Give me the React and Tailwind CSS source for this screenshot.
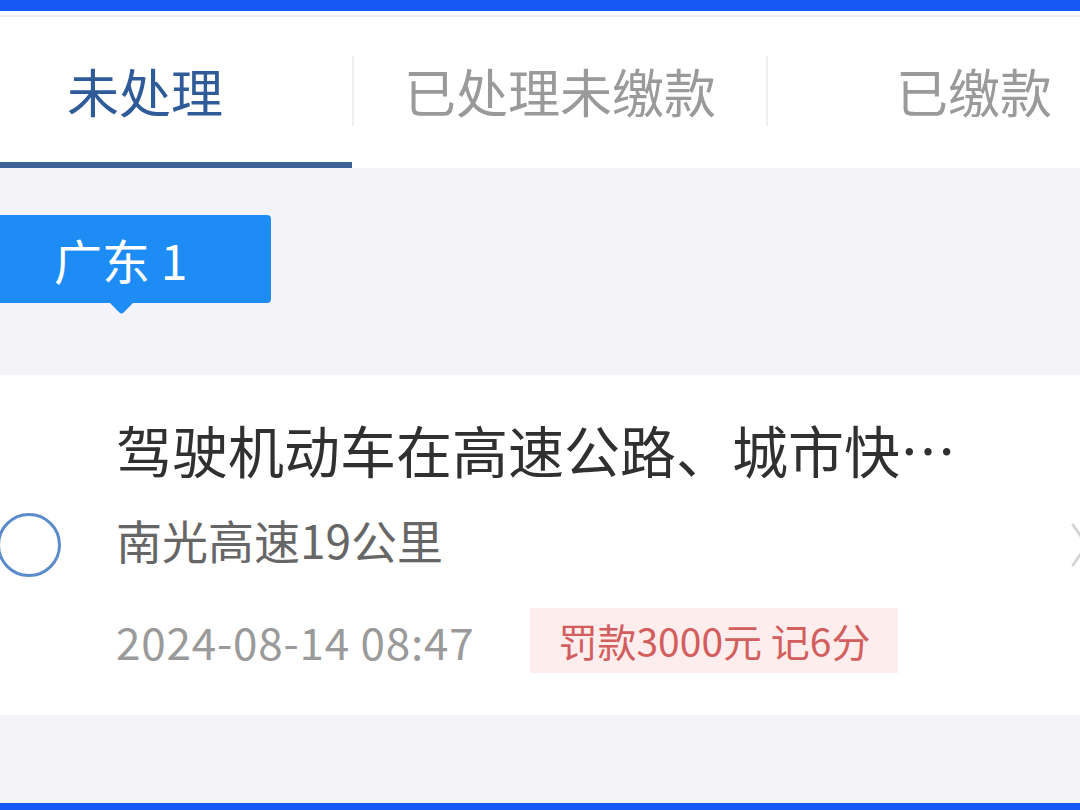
import React from "react";

const FONT = { fontFamily: '"Noto Sans CJK SC", "Noto Sans", sans-serif' };

export default function App() {
  return (
    <div className="w-[1080px] h-[810px] overflow-hidden bg-[#f4f3f8] flex flex-col" style={FONT}>
      <div className="h-[11px] bg-[#1558f6] shrink-0" />
      <div className="w-[1242px] ml-[-62px] flex flex-col flex-1">
        {/* tabs */}
        <div className="bg-white flex flex-col shrink-0">
          <div className="h-[4px] bg-white" />
          <div className="h-[2px] bg-[#ececf1]" />
          <div className="h-[145px] flex items-center pt-[2px]">
            <div className="w-[414px] flex justify-center text-[52px] leading-none text-[#2f5c98]">未处理</div>
            <div className="w-[2px] h-[70px] bg-[#efeff2]" />
            <div className="w-[412px] flex justify-center text-[52px] leading-none text-[#9a9a9a]">已处理未缴款</div>
            <div className="w-[2px] h-[70px] bg-[#efeff2]" />
            <div className="w-[412px] flex justify-center text-[52px] leading-none text-[#9a9a9a]">已缴款</div>
          </div>
          <div className="h-[6px] w-[414px] bg-[#3a6296]" />
        </div>

        {/* region tag */}
        <div className="pt-[47px] pl-[38px] shrink-0">
          <div className="relative w-[295px] h-[88px] bg-[#1e8cf5] rounded-[4px] flex items-center pl-[78px] text-white text-[48px] leading-none">
            <span>广东 1</span>
            <div className="absolute left-[137px] bottom-[-8px] w-[17px] h-[17px] bg-[#1e8cf5] rotate-45 rounded-br-[3px]" />
          </div>
        </div>

        {/* card */}
        <div className="mt-[72px] bg-white h-[340px] flex items-center shrink-0">
          <div className="w-[178px] flex justify-start pl-[59px] shrink-0">
            <div className="w-[64px] h-[64px] rounded-full border-[3px] border-[#5b8bca]" />
          </div>
          <div className="flex-1 flex flex-col pt-[0px]">
            <div className="text-[56px] leading-[64px] text-[#303030] whitespace-nowrap">驾驶机动车在高速公路、城市快…</div>
            <div className="mt-[30px] text-[46px] leading-[56px] text-[#666666]">南光高速19公里</div>
            <div className="mt-[41px] flex items-center">
              <span className="text-[44px] leading-none text-[#9a9a9a] tracking-[0.8px]">2024-08-14 08:47</span>
              <span className="ml-[56px] h-[65px] px-[28px] flex items-center bg-[#fdeded] text-[#d35e5e] text-[39px] leading-none">罚款3000元 记6分</span>
            </div>
          </div>
          <div className="w-[110px] flex justify-start shrink-0">
            <svg width="20" height="48" viewBox="0 0 20 48" fill="none">
              <path d="M3 4 L17 24 L3 44" stroke="#d4d4d8" strokeWidth="3" strokeLinecap="round" strokeLinejoin="round" />
            </svg>
          </div>
        </div>
        <div className="flex-1" />
      </div>
      <div className="h-[7px] bg-[#1558f6] shrink-0" />
    </div>
  );
}
